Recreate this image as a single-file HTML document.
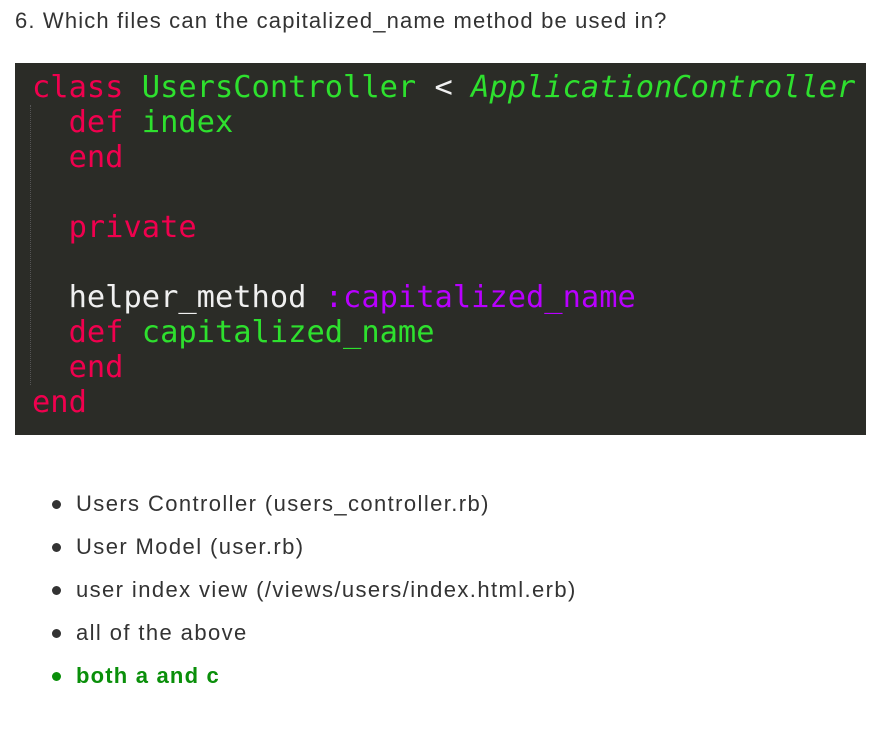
<!DOCTYPE html>
<html><head><meta charset="utf-8"><style>
body{margin:0;background:#fff;width:875px;height:733px;overflow:hidden;font-family:"Liberation Sans",sans-serif;color:#333}
.t{position:absolute;left:15px;top:8px;font-size:22px;letter-spacing:1.15px;line-height:26px}
.code{position:absolute;left:15px;top:63px;width:851px;height:372px;background:#2b2c27}
pre{margin:0;position:absolute;left:17px;top:7px;font-family:"DejaVu Sans Mono",monospace;font-size:30.4px;line-height:35px;color:#f0f0f0}
.r{color:#f0004e}.g{color:#2ee02e}.p{color:#b800ff}.w{color:#f0f0f0}
.guide{position:absolute;left:15px;top:42px;height:280px;border-left:1px dotted #555}
ul{position:absolute;left:0;top:482px;margin:0;padding:0;list-style:none;font-size:22px;letter-spacing:1.4px}
li{position:relative;padding-left:76px;height:43px;line-height:43px}
li:before{content:"";position:absolute;left:52px;top:18px;width:9px;height:9px;border-radius:50%;background:#333}
li.ok{color:#0a8f0a;font-weight:bold;letter-spacing:1.2px}li.ok:before{background:#0a8f0a}
</style></head><body>
<div class="t">6. Which files can the capitalized_name method be used in?</div>
<div class="code"><div class="guide"></div><pre><span class="r">class</span> <span class="g">UsersController</span> <span class="w">&lt;</span> <span class="g"><i>ApplicationController</i></span>
  <span class="r">def</span> <span class="g">index</span>
  <span class="r">end</span>

  <span class="r">private</span>

  <span class="w">helper_method</span> <span class="p">:capitalized_name</span>
  <span class="r">def</span> <span class="g">capitalized_name</span>
  <span class="r">end</span>
<span class="r">end</span></pre></div>
<ul>
<li>Users Controller (users_controller.rb)</li>
<li>User Model (user.rb)</li>
<li>user index view (/views/users/index.html.erb)</li>
<li>all of the above</li>
<li class="ok">both a and c</li>
</ul>
</body></html>
